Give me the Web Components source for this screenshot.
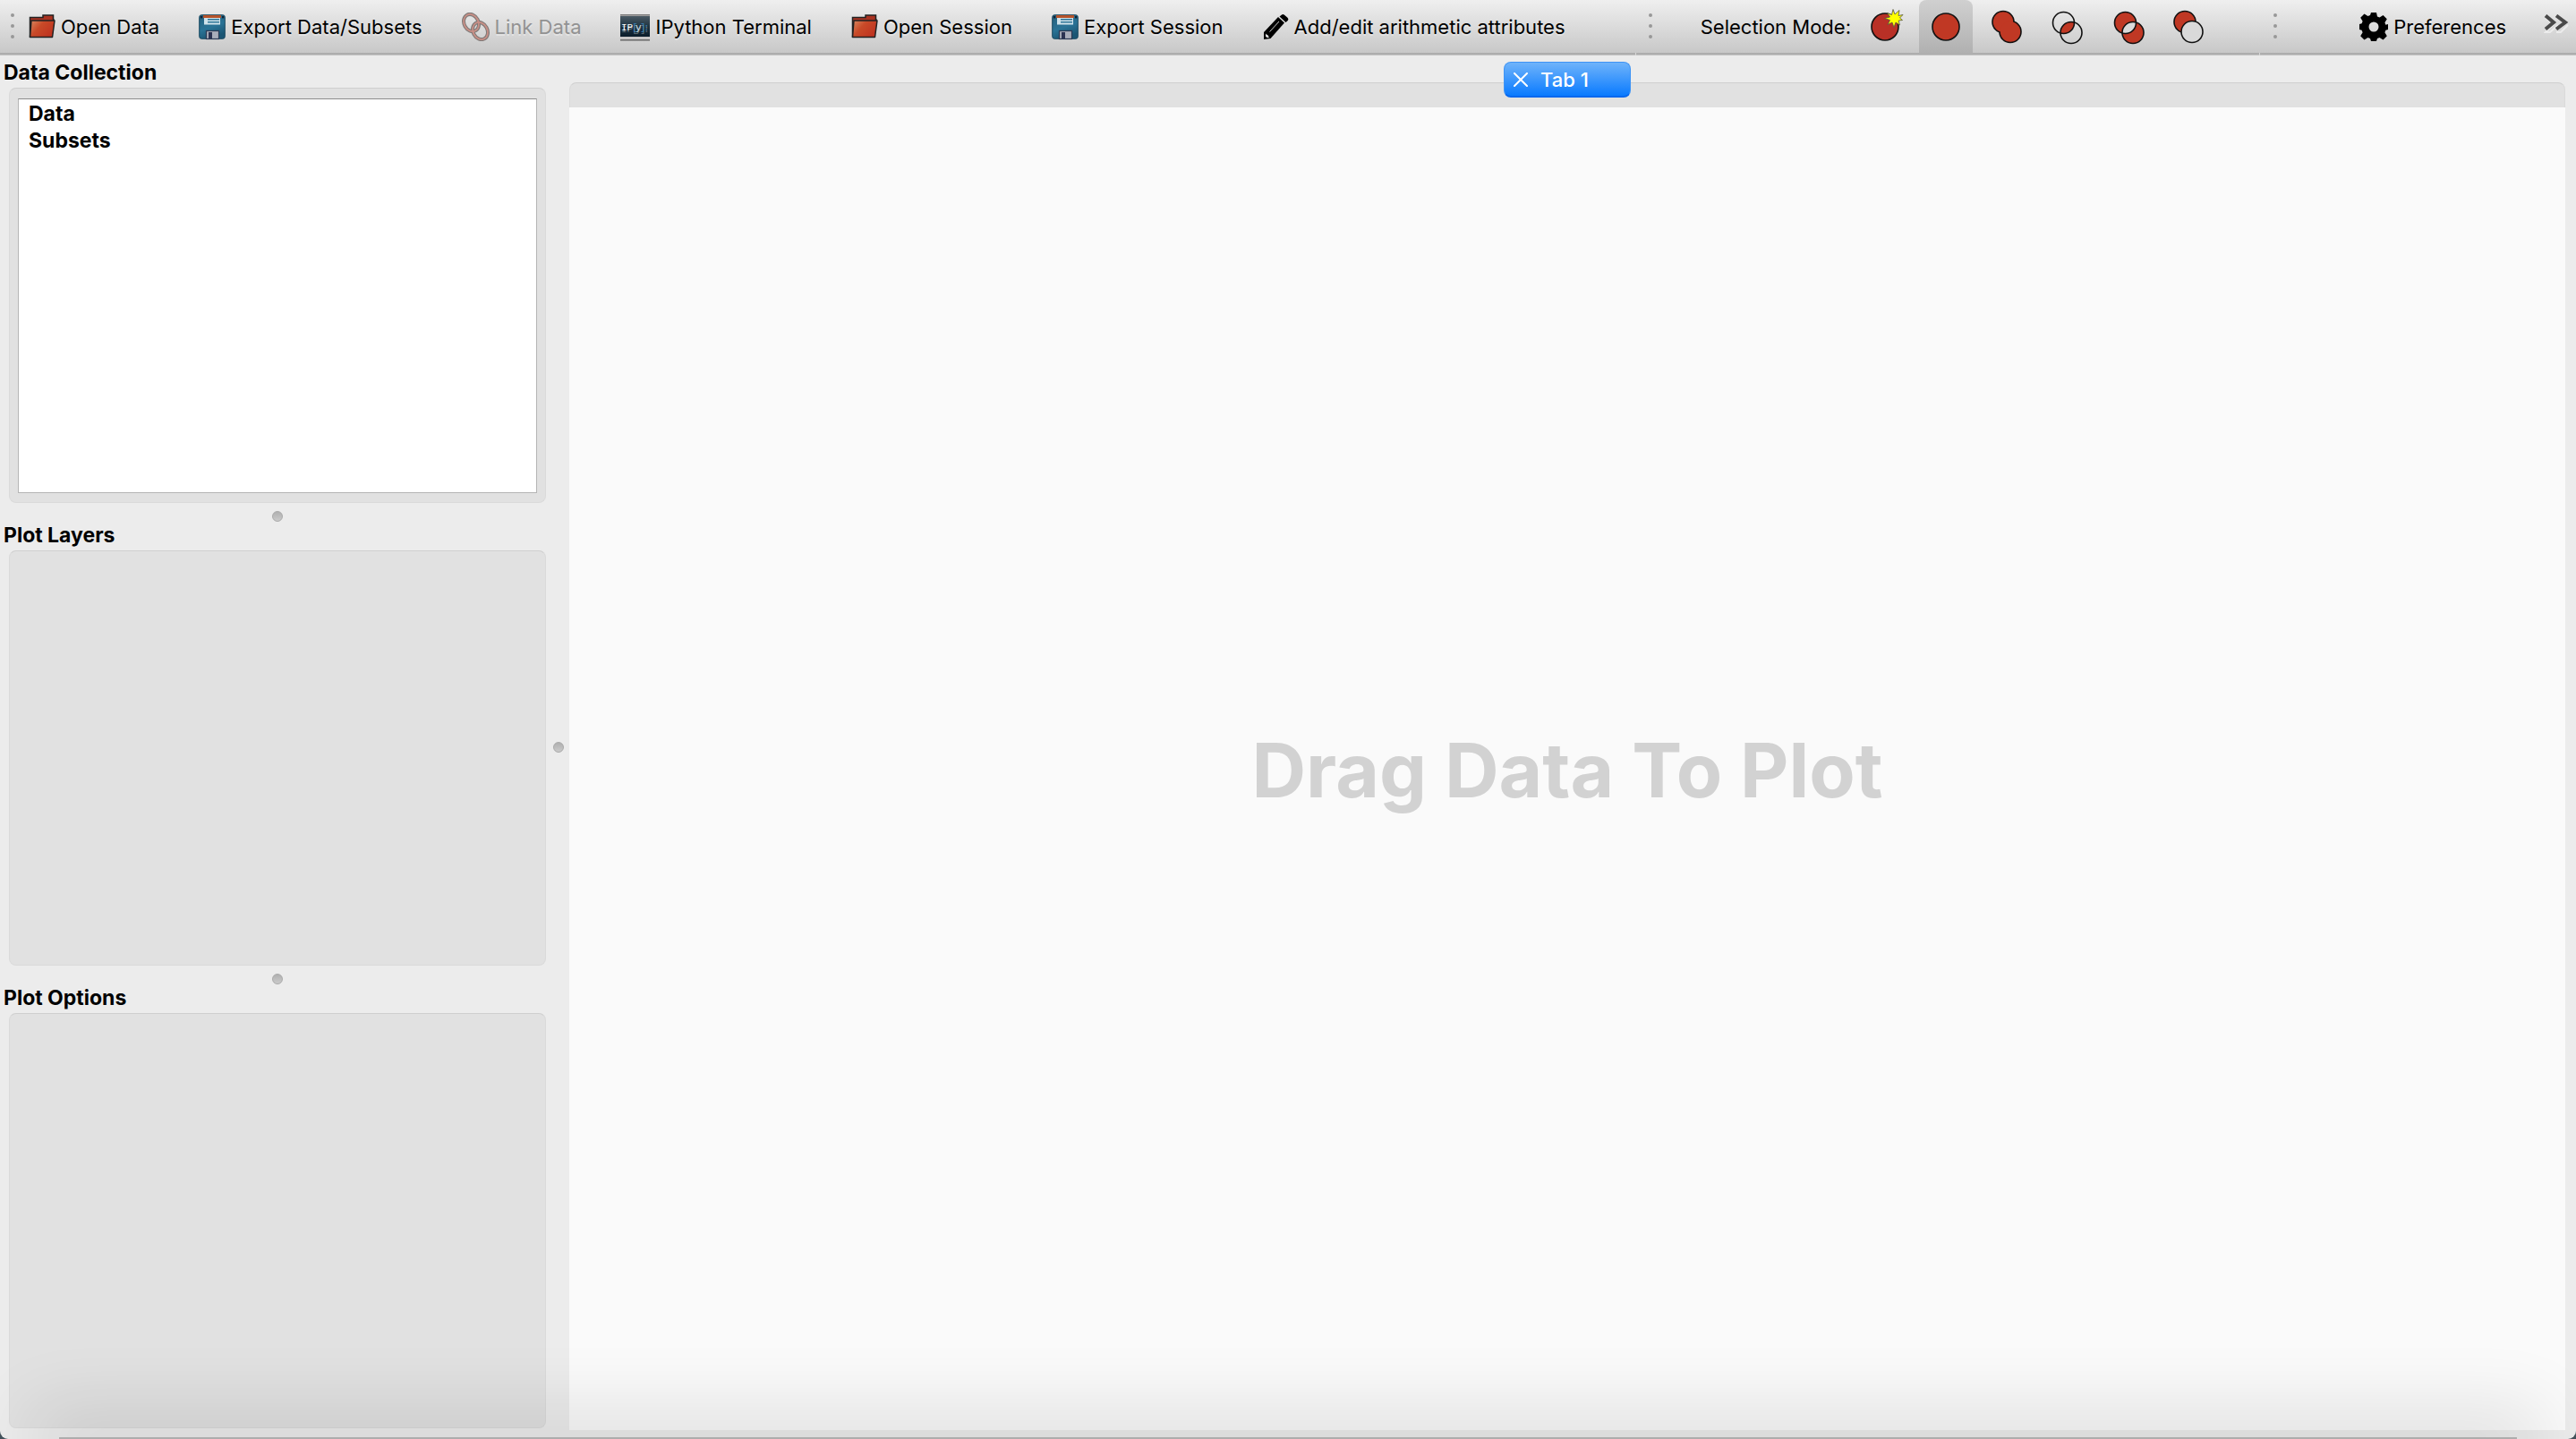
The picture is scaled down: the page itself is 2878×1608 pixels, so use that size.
<!DOCTYPE html>
<html lang="en">
<head>
<meta charset="utf-8">
<title>Glue</title>
<style>
html, body { height: 100%; margin: 0; }
body { background: #43525b; font: 22px/26px Inter, "Liberation Sans", sans-serif; color: #000; }
</style>
</head>
<body>
<glue-app></glue-app>

<script>
const OUT = 'stroke="#111" stroke-width="1.6"';
const RED = '#c03824';
const ICONS = {
  folder: [30, 32, `<defs><linearGradient id="f" x1="0" y1="0" x2="1" y2=".6"><stop offset="0" stop-color="#d98a62"/><stop offset=".45" stop-color="#c94a28"/><stop offset="1" stop-color="#bf3420"/></linearGradient></defs>
    <path d="M1.5 27V5.500H16V3h11.500v5H28v3L25 27z" fill="#a93220" stroke="#222" stroke-width="1.500"/>
    <path d="M3 9h26l-2.500 18.500H1.500z" fill="url(#f)" stroke="#222" stroke-width="1.500" stroke-linejoin="round"/>`],
  disk: [30, 32, `<defs><linearGradient id="d" x1="0" y1="0" x2=".4" y2="1"><stop offset="0" stop-color="#25607c"/><stop offset=".6" stop-color="#2a7396"/><stop offset="1" stop-color="#1b5674"/></linearGradient></defs>
    <rect x=".7" y="2.700" width="28.600" height="26.600" rx="2.500" fill="url(#d)" stroke="#1d4a61"/>
    <rect x="5" y="3" width="20" height="3" fill="#b5532a"/><rect x="6" y="6" width="18" height="7.500" fill="#cfe2ea"/>
    <path d="M10 7.800h13M10 10.800h13" stroke="#2c7597" stroke-width="1.600"/>
    <rect x="2" y="4" width="2.200" height="2.400" fill="#123"/><rect x="26" y="4" width="2.200" height="2.400" fill="#123"/>
    <rect x="8.500" y="20.500" width="14" height="9" fill="#a9adba" stroke="#2c3a55" stroke-width="1.200"/><rect x="11" y="22" width="4" height="7" fill="#2c3352"/>`],
  link: [31, 32, `<g fill="none"><g stroke="#7f7a78" stroke-width="4"><ellipse cx="10.500" cy="11.500" rx="8" ry="10" transform="rotate(-28 10.500 11.500)"/><ellipse cx="20.500" cy="20.500" rx="8" ry="10" transform="rotate(-28 20.500 20.500)"/></g>
    <g stroke="#c98f86" stroke-width="1.800"><ellipse cx="10.500" cy="11.500" rx="8" ry="10" transform="rotate(-28 10.500 11.500)"/><ellipse cx="20.500" cy="20.500" rx="8" ry="10" transform="rotate(-28 20.500 20.500)"/></g></g>`],
  ipython: [33, 32, `<defs><linearGradient id="p" x1="0" y1="0" x2="0" y2="1"><stop offset="0" stop-color="#4a5a64"/><stop offset=".5" stop-color="#1f3442"/><stop offset="1" stop-color="#0a1c2a"/></linearGradient></defs>
    <rect y="2" width="33" height="30" fill="#c8c6c6"/><rect y="2" width="33" height="1.500" fill="#777"/><rect y="4" width="33" height="23" fill="url(#p)"/><rect y="30" width="33" height="1.500" fill="#6b6b6b"/>
    <g font-family="Liberation Mono, monospace" font-size="11"><text x="1" y="20" fill="#fff">IP</text><text x="13" y="20" fill="#3b82b5">[</text><text x="17" y="20" fill="#d5e5ee">y</text><text x="22" y="20" fill="#3b82b5">]</text><text x="26" y="20" fill="#3b82b5">:</text></g>`],
  pencil: [29, 32, `<path d="M1 30V22L17 5l7 6.500L8.500 29z"/><path d="M18.500 3.500 21 1.500q1.500-1 3 .3l3.500 3q1.500 1.500.5 3L25.500 10z" transform="translate(0 1)"/><path d="M3 23.500l1.200 1.200 1.200.3.600 1.500 1.200 1L5 28.300 3 26.800z" fill="#ddd"/><path d="M7.500 21.500 18 10" stroke="#ccc" stroke-width="1"/>`],
  fresh: [60, 60, `<circle cx="30" cy="30" r="15" fill="#b93026" ${OUT}/><path d="M39 10.500l2 5.500 5-4.500-1 6 5-1-3.500 3.500 3 2.500-4.300.5 1.300 5-4.500-3-2 5.500-2-5.500-5 2.500 2.500-5-6-2 6-1.500-3-4.500 5 2z" fill="#ff0" stroke="#554" stroke-width=".8"/>`],
  replace: [60, 60, `<circle cx="30" cy="30" r="15" fill="${RED}" ${OUT}/>`],
  or: [60, 60, `<g stroke="#111" stroke-width="1.600"><circle cx="26" cy="24.500" r="12"/><circle cx="34" cy="35.500" r="12"/></g><g fill="${RED}"><circle cx="26" cy="24.500" r="11.200"/><circle cx="34" cy="35.500" r="11.200"/></g>`],
  and: [60, 60, `<clipPath id="a"><circle cx="25.500" cy="25.500" r="12"/></clipPath><circle cx="34" cy="36.500" r="12" fill="${RED}" clip-path="url(#a)"/><g fill="none" ${OUT}><circle cx="25.500" cy="25.500" r="12"/><circle cx="34" cy="36.500" r="12"/></g>`],
  xor: [60, 60, `<clipPath id="x"><circle cx="26.500" cy="25.500" r="12"/></clipPath><g fill="${RED}"><circle cx="26.500" cy="25.500" r="12"/><circle cx="35" cy="36.500" r="12"/></g><circle cx="35" cy="36.500" r="12" fill="#dadada" clip-path="url(#x)"/><g fill="none" ${OUT}><circle cx="26.500" cy="25.500" r="12"/><circle cx="35" cy="36.500" r="12"/></g>`],
  not: [60, 60, `<circle cx="25" cy="24.500" r="12" fill="${RED}" ${OUT}/><circle cx="33" cy="35.500" r="12" fill="#d9d9d9" ${OUT}/>`],
  gear: [32, 32, `<path fill-rule="evenodd" d="M13 0h6l1 4.600 2.500 1 4-2.500 4.300 4.200-2.400 4 1 2.500L32 13v6l-2.600.8-1 2.500 2.400 4-4.300 4.200-4-2.400-2.500 1L19 32h-6l-1-2.900-2.500-1-4 2.400-4.300-4.200 2.400-4-1-2.500L0 19v-6l2.600-.8 1-2.500-2.400-4L5.500 1.500l4 2.500 2.500-1zM16 10.500a5.500 5.500 0 1 0 0 11 5.500 5.500 0 0 0 0-11z"/>`],
  more: [28, 28, `<g fill="none"><path d="M2 4l9 7-9 9h5l9-8M14 20h5l8-8" stroke="#fff" opacity=".5" stroke-width="2"/><path d="M2 1.500l9 7.500-9 7.500M14 1.500l10 7.500-10 7.500" stroke="#4a4a4a" stroke-width="4"/></g>`],
  close: [16, 16, `<path d="M1 1l14 14M15 1 1 15" stroke="#fff" stroke-width="2" stroke-linecap="round"/>`]
};

class Base extends HTMLElement {
  render(css, html) {
    this.attachShadow({ mode: "open" }).innerHTML = `<style>*{box-sizing:border-box}${css}</style>${html}`;
  }
}

customElements.define("glue-icon", class extends Base {
  connectedCallback() {
    const [w, h, body] = ICONS[this.getAttribute("name")];
    this.render(`:host{display:block;flex:none}svg{display:block}`,
      `<svg width="${w}" height="${h}" viewBox="0 0 ${w} ${h}" aria-hidden="true">${body}</svg>`);
  }
});

customElements.define("tool-action", class extends Base {
  connectedCallback() {
    const off = this.hasAttribute("disabled");
    const label = this.getAttribute("label");
    this.render(`:host{display:block;flex:none}
      button{display:flex;align-items:center;gap:6px;height:60px;padding:0;border:0;background:none;font:inherit;color:#000;white-space:nowrap;text-shadow:0 2px 0 rgba(255,255,255,.35)}
      button:disabled{color:#929292}`,
      `<button ${off ? "disabled" : ""} ${label ? `aria-label="${label}"` : ""}><glue-icon name="${this.getAttribute("icon")}"></glue-icon><slot></slot></button>`);
  }
});

customElements.define("mode-button", class extends Base {
  connectedCallback() {
    const on = this.hasAttribute("selected");
    this.render(`:host{display:block;flex:none}
      button{display:block;width:60px;height:60px;padding:0;border:0;background:none;border-radius:8px 8px 0 0}
      button[aria-pressed=true]{background:linear-gradient(#d0d0d0,#b0b0b0)}`,
      `<button aria-pressed="${on}" aria-label="${this.getAttribute("label")}"><glue-icon name="${this.getAttribute("icon")}"></glue-icon></button>`);
  }
});

customElements.define("tool-bar", class extends Base {
  connectedCallback() {
    this.render(`:host{display:flex;align-items:center;height:62px;min-width:0;background:linear-gradient(#efefef,#c8c8c8 59px,#adadad 59px,#adadad 61px,#c4c4c4 61px)}
      .grip{flex:none;display:grid;gap:8px;margin:0 var(--grip-after,16px) 4px var(--grip-before,12px)}
      .grip i{width:4px;height:4px;border-radius:2px;background:#989898}
      .items{display:flex;align-items:center;flex:1;gap:var(--gap,44px);height:60px;margin-bottom:2px}`,
      `<div class="grip"><i></i><i></i><i></i></div><div class="items"><slot></slot></div>`);
  }
});

customElements.define("split-handle", class extends Base {
  connectedCallback() {
    this.render(`:host{display:flex;align-items:center;justify-content:center;flex:none}
      i{flex:none;width:12px;height:12px;border-radius:50%;background:linear-gradient(#b0b0b0,#cacaca);border:1px solid #a9a9a9}`, `<i></i>`);
  }
});

customElements.define("side-panel", class extends Base {
  connectedCallback() {
    this.render(`:host{display:flex;flex-direction:column;flex:1;min-height:0}
      h2{margin:0;padding:0 4px 3px;font-size:23px;line-height:28px;font-weight:700}
      .box{flex:1;min-height:0;display:flex;margin:0 10px;padding:11px 9px 10px;background:#e1e1e1;border:1px solid #dadada;border-top-color:#cfcfcf;border-radius:8px}`,
      `<h2>${this.getAttribute("heading")}</h2><div class="box"><slot></slot></div>`);
  }
});

customElements.define("data-tree", class extends Base {
  connectedCallback() {
    this.render(`:host{display:block;flex:1;background:#fff;border:1px solid #b5b5b5;border-top-color:#8c8c8c}
      ul{list-style:none;margin:0;padding:1px 11px}li{font-size:23px;line-height:30px;font-weight:700}`,
      `<ul><li>Data</li><li>Subsets</li></ul>`);
  }
});

customElements.define("plot-area", class extends Base {
  connectedCallback() {
    this.render(`:host{display:flex;flex-direction:column;flex:1;min-width:0;margin:7px 12px 10px 0}
      .tabs{position:relative;display:flex;justify-content:center;height:51px}
      .rail{position:absolute;inset:23px 0 0;background:#e1e1e1;border:1px solid #dadada;border-top-color:#cfcfcf;border-bottom:0;border-radius:8px 8px 0 0}
      button{position:relative;display:flex;align-items:center;gap:14px;width:142px;height:40px;padding:0 10px;border:1px solid #3f94f5;border-bottom:2px solid #0768ee;border-radius:8px;background:linear-gradient(#6fb3fa,#0a7bff);color:#fff;font:inherit;font-weight:500}
      .canvas{flex:1;display:flex;align-items:center;justify-content:center;padding-top:4px;background:#fafafa;color:#d2d2d2;font-size:84px;line-height:104px;font-weight:700}`,
      `<div class="tabs" role="tablist"><div class="rail"></div><button role="tab" aria-selected="true"><glue-icon name="close"></glue-icon><span>Tab 1</span></button></div>
       <div class="canvas"><span>Drag Data To Plot</span></div>`);
  }
});

customElements.define("glue-app", class extends Base {
  connectedCallback() {
    this.render(`:host{position:relative;display:flex;flex-direction:column;height:100%;overflow:hidden;background:#ececec;border-radius:0 0 9px 9px}
      header{display:grid;grid-template-columns:1828fr 697fr 353fr;gap:1px;background:linear-gradient(#efefef,#c8c8c8 59px,#d8d8d8 59px)}
      main{flex:1;display:flex;min-height:0}
      aside{display:flex;flex-direction:column;width:620px;padding:5px 0 12px}
      aside split-handle{height:22px;padding-top:8px}
      .main-split{width:8px;margin-right:8px}
      .label{white-space:nowrap}
      .modes{--grip-before:14px;--grip-after:54px;--gap:8px}
      .prefs{--grip-before:15px;--grip-after:92px;--gap:42px}
      .shade{position:absolute;left:66px;right:66px;bottom:0;height:2px;background:#adadad;box-shadow:0 0 80px 30px rgba(0,0,0,.12);pointer-events:none}`,
      `<header>
        <tool-bar>
          <tool-action icon="folder">Open Data</tool-action>
          <tool-action icon="disk">Export Data/Subsets</tool-action>
          <tool-action icon="link" disabled>Link Data</tool-action>
          <tool-action icon="ipython">IPython Terminal</tool-action>
          <tool-action icon="folder">Open Session</tool-action>
          <tool-action icon="disk">Export Session</tool-action>
          <tool-action icon="pencil">Add/edit arithmetic attributes</tool-action>
        </tool-bar>
        <tool-bar class="modes">
          <span class="label">Selection Mode:</span>
          <mode-button icon="fresh" label="New subset"></mode-button>
          <mode-button icon="replace" label="Replace" selected></mode-button>
          <mode-button icon="or" label="Or"></mode-button>
          <mode-button icon="and" label="And"></mode-button>
          <mode-button icon="xor" label="Xor"></mode-button>
          <mode-button icon="not" label="And not"></mode-button>
        </tool-bar>
        <tool-bar class="prefs">
          <tool-action icon="gear">Preferences</tool-action>
          <tool-action icon="more" label="More"></tool-action>
        </tool-bar>
      </header>
      <main>
        <aside>
          <side-panel heading="Data Collection"><data-tree></data-tree></side-panel>
          <split-handle></split-handle>
          <side-panel heading="Plot Layers"></side-panel>
          <split-handle></split-handle>
          <side-panel heading="Plot Options"></side-panel>
        </aside>
        <split-handle class="main-split"></split-handle>
        <plot-area></plot-area>
      </main>
      <div class="shade"></div>`);
  }
});
</script>
</body>
</html>
